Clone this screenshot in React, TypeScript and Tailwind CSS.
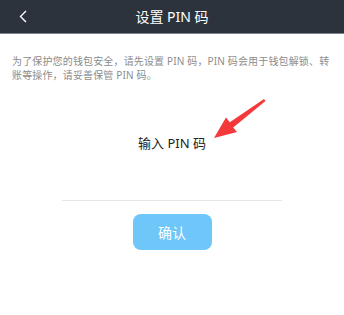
export default function App() {
  return (
    <div
      className="relative w-[344px] h-[315px] bg-white overflow-hidden"
      style={{ fontFamily: '"Noto Sans", "Noto Sans CJK SC", sans-serif' }}
    >
      <div className="h-[33px] bg-[#2c333c] border-b border-[#7d848c] box-content flex items-center relative">
        <svg className="absolute left-[18px] top-[10px]" width="10" height="13" viewBox="0 0 10 13">
          <path d="M8 1 L2.5 6.5 L8 12" fill="none" stroke="#ffffff" strokeWidth="1.4" />
        </svg>
        <div className="flex-1 text-center text-white text-[14px] leading-none">设置 PIN 码</div>
      </div>

      <div className="px-[12px] pt-[20px] text-[10px] leading-[14px] text-[#8c8c8c] tracking-[0.15px]">
        为了保护您的钱包安全，请先设置 PIN 码，PIN 码会用于钱包解锁、转
        <br />
        账等操作，请妥善保管 PIN 码。
      </div>

      <div className="mt-[53px] text-center text-[13px] leading-[16px] text-[#222]">输入 PIN 码</div>

      <div className="mx-auto mt-[49px] w-[220px] h-px bg-[#e6e6e6]" />

      <div className="flex justify-center mt-[13px]">
        <button className="w-[79px] h-[36px] rounded-[8px] bg-[#6ec6f9] text-white text-[14px]">确认</button>
      </div>

      <svg className="absolute left-0 top-0 pointer-events-none" width="344" height="315" viewBox="0 0 344 315">
        <polygon
          points="214,138 226,117.5 229.8,122.2 264,99 265.5,101 233.2,127.4 237,132"
          fill="#f5383a"
        />
      </svg>
    </div>
  );
}
